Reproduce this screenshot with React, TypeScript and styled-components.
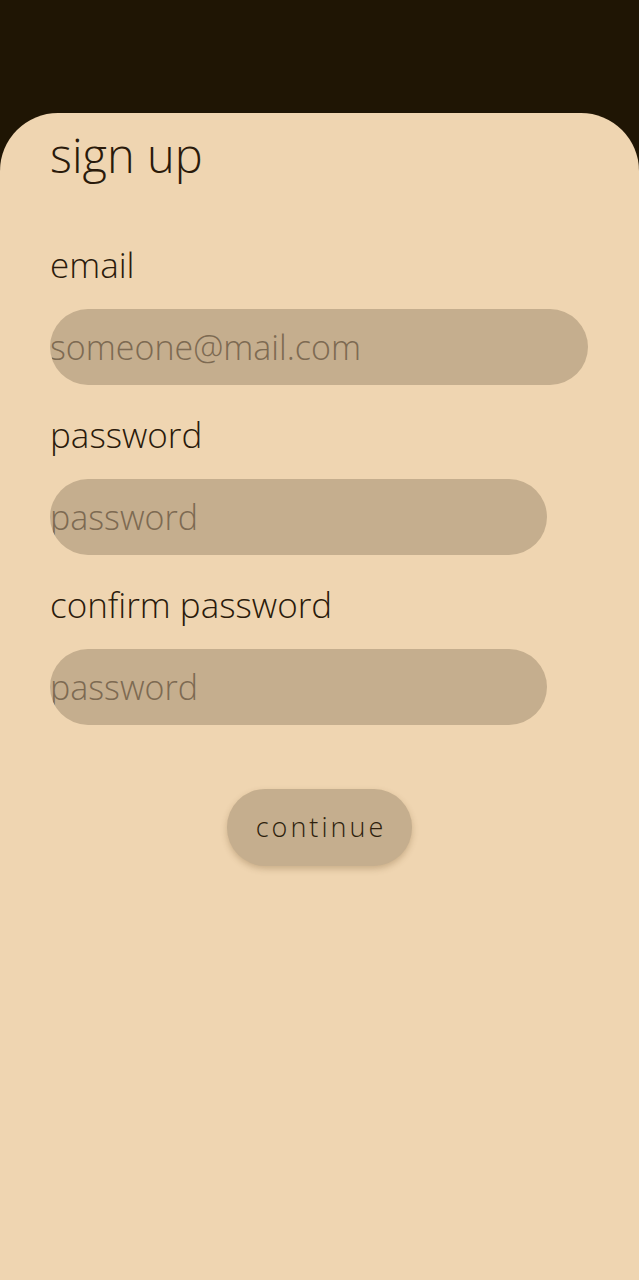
import React from "react";
import styled, { createGlobalStyle } from "styled-components";

const Global = createGlobalStyle`
  html, body { margin: 0; padding: 0; background: #1f1504; }
  body { font-family: "Open Sans", "DejaVu Sans", sans-serif; }
  * { box-sizing: border-box; }
`;

const Screen = styled.div`
  width: 639px;
  height: 1280px;
  background: #1f1504;
  display: flex;
  flex-direction: column;
  padding-top: 113px;
  overflow: hidden;
`;

const Sheet = styled.div`
  flex: 1;
  background: #efd5b1;
  border-radius: 58px 58px 0 0;
  padding: 19px 0 0 50px;
  display: flex;
  flex-direction: column;
`;

const Title = styled.h1`
  margin: 0 0 69px;
  font-size: 47px;
  line-height: 47px;
  font-weight: 300;
  color: #2a1a0b;
`;

const Form = styled.form`
  display: flex;
  flex-direction: column;
`;

const Label = styled.label`
  font-size: 35px;
  line-height: 34px;
  font-weight: 300;
  color: #2a1a0b;
  margin-bottom: 27px;
`;

const Input = styled.input<{ $w: number }>`
  width: ${(p) => p.$w}px;
  height: 76px;
  border: none;
  outline: none;
  border-radius: 38px;
  background: #c5ae8e;
  padding: 0;
  margin-bottom: 33px;
  font-family: inherit;
  font-size: 34px;
  font-weight: 300;
  color: #2a1a0b;
  &::placeholder {
    color: #7d6a52;
    opacity: 1;
  }
`;

const Actions = styled.div`
  display: flex;
  justify-content: center;
  width: 539px;
  margin-top: 31px;
`;

const Button = styled.button`
  width: 185px;
  height: 77px;
  border: none;
  border-radius: 38px;
  background: #c5ae8e;
  box-shadow: 0 3px 6px rgba(90, 60, 20, 0.25);
  font-family: inherit;
  font-size: 27px;
  font-weight: 300;
  letter-spacing: 3px;
  color: #2e1f0d;
  padding: 0 0 2px 3px;
  cursor: pointer;
`;

export default function App() {
  return (
    <Screen>
      <Global />
      <Sheet>
        <Title>sign up</Title>
        <Form onSubmit={(e) => e.preventDefault()}>
          <Label htmlFor="email">email</Label>
          <Input id="email" $w={538} placeholder="someone@mail.com" />
          <Label htmlFor="pw">password</Label>
          <Input id="pw" $w={497} type="password" placeholder="password" />
          <Label htmlFor="pw2">confirm password</Label>
          <Input id="pw2" $w={497} type="password" placeholder="password" />
          <Actions>
            <Button type="submit">continue</Button>
          </Actions>
        </Form>
      </Sheet>
    </Screen>
  );
}
